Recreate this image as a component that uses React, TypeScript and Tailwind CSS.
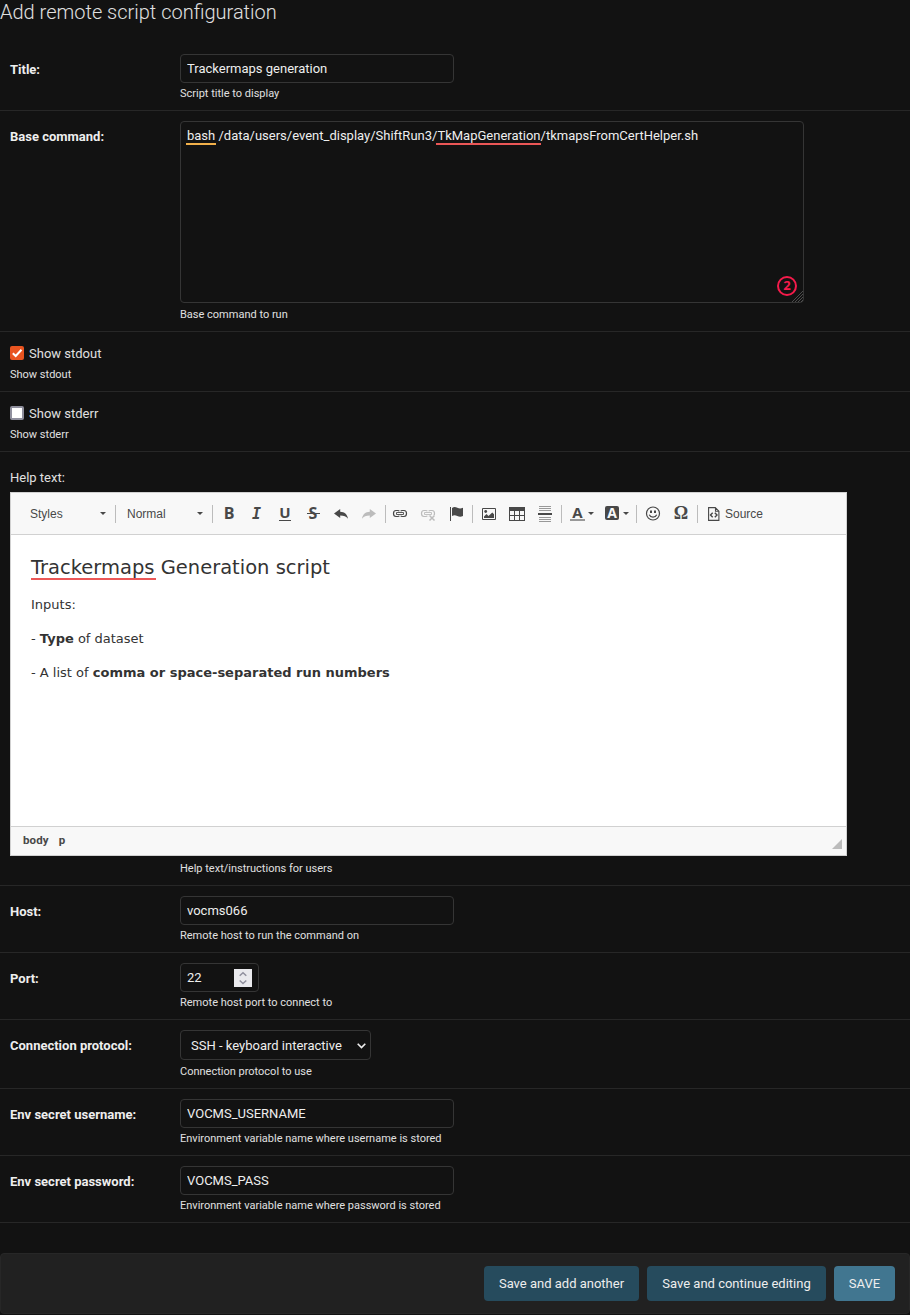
import type { ReactNode } from "react";

const ICON = "#484848";
const MUTED = "#bcbcbc";

function Help({ children, className = "mt-1" }: { children: ReactNode; className?: string }) {
  return <p className={`text-[11px] leading-[14px] text-[#e0e0e0] ${className}`}>{children}</p>;
}

function Row({ label, height = "h-[67px]", children }: { label: string; height?: string; children: ReactNode }) {
  return (
    <div className={`flex border-b border-[#272727] px-[10px] pt-[10px] ${height}`}>
      <label className="w-[170px] shrink-0 pt-[5px] text-[13px] leading-[22px] font-bold text-[#eeeeee]">{label}</label>
      <div>{children}</div>
    </div>
  );
}

function TextInput({ value }: { value: string }) {
  return (
    <input
      type="text"
      defaultValue={value}
      className="block h-[29px] w-[274px] rounded border border-[#353535] bg-[#121212] px-[6px] text-[13px] text-[#eeeeee] outline-none"
    />
  );
}

function CheckRow({ label, checked }: { label: string; checked?: boolean }) {
  return (
    <div className="h-[60px] border-b border-[#272727] px-[10px] pt-[11px]">
      <div className="flex h-[22px] items-center gap-[5px]">
        {checked ? (
          <svg width="14" height="14" viewBox="0 0 14 14" className="mb-[2px]" role="checkbox" aria-checked="true">
            <rect width="14" height="14" rx="2" fill="#e95420" />
            <path d="M2.800 7.200 5.700 10 11.500 3.800" fill="none" stroke="#fff" strokeWidth="2" />
          </svg>
        ) : (
          <span className="mb-[2px] size-[14px] rounded-[2px] border-2 border-[#8f8f9d] bg-white" role="checkbox" aria-checked="false" />
        )}
        <span className="text-[13px] leading-[22px] text-[#e0e0e0]">{label}</span>
      </div>
      <Help className="mt-[3px]">{label}</Help>
    </div>
  );
}

function Sep({ className = "" }: { className?: string }) {
  return <span className={`h-[18px] w-px shrink-0 bg-[#bcbcbc] ${className}`} />;
}

function Caret({ className = "" }: { className?: string }) {
  return (
    <svg width="6" height="3" viewBox="0 0 6 3" className={`shrink-0 ${className}`}>
      <path d="M0 0h6L3 3z" fill={ICON} />
    </svg>
  );
}

function Tool({ children }: { children: ReactNode }) {
  return <span className="flex h-7 w-7 shrink-0 items-center justify-center">{children}</span>;
}

function Svg({ children }: { children: ReactNode }) {
  return (
    <svg width="16" height="16" viewBox="0 0 16 16" fill="none">
      {children}
    </svg>
  );
}

function LinkShape({ color }: { color: string }) {
  return (
    <g stroke={color}>
      <path d="M7.300 5.200C7 4.700 6.500 4.500 6 4.500H4C2.300 4.500 1.500 5.800 1.500 7.500S2.300 10.500 4 10.500h2c.5 0 1-.2 1.300-.7" strokeWidth="1.200" />
      <path d="M8.700 5.200c.3-.5.8-.7 1.300-.7h2c1.700 0 2.500 1.300 2.500 3s-.8 3-2.500 3h-2c-.5 0-1-.2-1.300-.7" strokeWidth="1.200" />
      <path d="M4.500 6.500h7v2h-7z" strokeWidth=".9" />
    </g>
  );
}

function Toolbar() {
  return (
    <div className="flex h-[42px] items-center border-b border-[#d1d1d1] bg-[#f8f8f8] font-['Liberation_Sans',sans-serif] text-[12px] text-[#484848]">
      <span className="ml-[19px] w-[70px] pt-px">Styles</span>
      <Caret />
      <Sep className="ml-[9px]" />
      <span className="ml-[11px] w-[70px] pt-px">Normal</span>
      <Caret />
      <Sep className="ml-[9px]" />
      <span className="w-[2px]" />
      <Tool>
        <b className="mb-[2px] font-['Open_Sans',sans-serif] text-[16px] leading-4">B</b>
      </Tool>
      <Tool>
        <b className="-ml-px font-['DejaVu_Sans_Mono',monospace] text-[15px] leading-4 italic">I</b>
      </Tool>
      <Tool>
        <b className="h-[15px] border-b border-[#484848] font-['Open_Sans',sans-serif] text-[15px] leading-[13px]">U</b>
      </Tool>
      <Tool>
        <span className="relative mb-[2px] flex w-[13px] justify-center">
          <b className="font-['Open_Sans',sans-serif] text-[16px] leading-4">S</b>
          <span className="absolute top-[8px] left-0 h-px w-[13px] bg-[#484848]" />
        </span>
      </Tool>
      <Tool>
        <Svg>
          <path d="M1 7.500 7.200 3v2.700c4.300.1 7 2.200 7.800 7C13.200 10.500 11 9.500 7.200 9.500V12z" fill={ICON} />
        </Svg>
      </Tool>
      <Tool>
        <Svg>
          <path d="M15 7.500 8.800 3v2.700C4.500 5.800 1.800 7.900 1 12.700c1.800-2.200 4-3.200 7.800-3.200V12z" fill={MUTED} />
        </Svg>
      </Tool>
      <Sep className="ml-[2px]" />
      <Tool>
        <Svg>
          <LinkShape color={ICON} />
        </Svg>
      </Tool>
      <Tool>
        <Svg>
          <LinkShape color={MUTED} />
          <path d="M8.500 9h7.500v7H8.500z" fill="#f8f8f8" />
          <path d="m9.500 9.500 5 5M14.500 9.500l-5 5" stroke={MUTED} strokeWidth="1.500" />
        </Svg>
      </Tool>
      <Tool>
        <Svg>
          <path d="M2 1h1v14H2z" fill={ICON} />
          <path d="M4 2c2-1.300 3.500-1 5.300-.2 2 .8 3.500.8 5.700 0V10c-2.200.9-3.700.8-5.700 0C7.500 9.200 6 9 4 10z" fill={ICON} />
        </Svg>
      </Tool>
      <Sep className="ml-[2px]" />
      <span className="w-[2px]" />
      <Tool>
        <Svg>
          <path d="M1.500 2.500h13v11h-13z" stroke={ICON} />
          <circle cx="4.700" cy="5.500" r="1.400" fill={ICON} />
          <path d="M3 12V10.500L5.500 8l2 2L11.300 6.500 13 8.300V12z" fill={ICON} />
        </Svg>
      </Tool>
      <Tool>
        <Svg>
          <path d="M0 1h16v14H0z" fill={ICON} />
          <path d="M1 5h4v4H1zM6 5h4v4H6zM11 5h4v4h-4zM1 10h4v4H1zM6 10h4v4H6zM11 10h4v4h-4z" fill="#f8f8f8" />
        </Svg>
      </Tool>
      <Tool>
        <Svg>
          <path d="M2 .5h12M2 2.500h12M2 4.500h12M2 11.500h12M2 13.500h12M2 15.500h12" stroke="#999" />
          <path d="M1 7h14v2H1z" fill={ICON} />
        </Svg>
      </Tool>
      <Sep className="ml-[2px]" />
      <span className="ml-2 flex h-[15px] flex-col items-center justify-between">
        <b className="font-['Open_Sans',sans-serif] text-[15px] leading-[12px]">A</b>
        <span className="h-[2px] w-[15px] bg-[#999999]" />
      </span>
      <Caret className="ml-[3px]" />
      <span className="mb-px ml-[11px] flex size-[14px] items-center justify-center rounded-[2px] bg-[#484848]">
        <b className="font-['Open_Sans',sans-serif] text-[14px] leading-[14px] text-[#f8f8f8]">A</b>
      </span>
      <Caret className="ml-1" />
      <Sep className="ml-[7px]" />
      <span className="w-[2px]" />
      <Tool>
        <Svg>
          <circle cx="8" cy="7.500" r="6.500" stroke={ICON} strokeWidth="1.200" />
          <path d="M5 4.500h2V7H5zM9 4.500h2V7H9z" fill={ICON} />
          <path d="M4.300 8.800c1.200 3 6.200 3 7.400 0" stroke={ICON} strokeWidth="1.200" />
        </Svg>
      </Tool>
      <Tool>
        <b className="mb-px font-['Liberation_Serif',serif] text-[18px] leading-4">Ω</b>
      </Tool>
      <Sep className="ml-[2px]" />
      <svg width="12" height="14" viewBox="0 0 12 14" fill="none" className="ml-[10px]">
        <path d="M.6.600h6.700l3.600 3.600v9.200H.6zM7.500.5v3.700H11" stroke={ICON} strokeWidth="1.100" />
        <path d="M4.700 5.800 2.500 8l2.200 2.200M6.800 5.800 9 8l-2.200 2.200" stroke={ICON} strokeWidth="1.400" />
      </svg>
      <span className="ml-[5px] pt-px">Source</span>
    </div>
  );
}

function Editor() {
  return (
    <div className="h-[364px] w-[837px] border border-[#d1d1d1] bg-white">
      <Toolbar />
      <div className="h-[291px] px-5 pt-5 font-['DejaVu_Sans',sans-serif] text-[13px] leading-[21px] text-[#333333]">
        <h2 className="h-[24px] text-[19.5px] leading-[26px]">
          <span className="relative">
            Trackermaps
            <span className="absolute -bottom-px left-0 h-[2px] w-[125px] bg-[#eb5757]" />
          </span>{" "}
          Generation script
        </h2>
        <p className="mt-[15px]">Inputs:</p>
        <p className="mt-[13px]">
          - <b>Type</b> of dataset
        </p>
        <p className="mt-[13px]">
          - A list of <b>comma or space-separated run numbers</b>
        </p>
      </div>
      <div className="flex h-[29px] items-center justify-between border-t border-[#d1d1d1] bg-[#f8f8f8] pr-1 pl-3 text-[11.5px] font-bold tracking-[0.1px] text-[#484848]">
        <div className="flex gap-[10px]">
          <span>body</span>
          <span>p</span>
        </div>
        <svg width="10" height="10" viewBox="0 0 10 10" className="mt-[6px]">
          <path d="M10 0v10H0z" fill="#bcbcbc" />
        </svg>
      </div>
    </div>
  );
}

function SaveButton({ children, className }: { children: ReactNode; className: string }) {
  return <button className={`h-[35px] rounded text-[13px] text-[#eeeeee] ${className}`}>{children}</button>;
}

export default function App() {
  return (
    <main className="min-h-[1315px] w-full overflow-hidden bg-[#121212] font-[Roboto,sans-serif] text-[#eeeeee]">
      <h1 className="h-[44px] text-[20px] leading-6 font-light text-[#e0e0e0]">Add remote script configuration</h1>

      <Row label="Title:">
        <TextInput value="Trackermaps generation" />
        <Help>Script title to display</Help>
      </Row>

      <Row label="Base command:" height="h-[221px]">
        <div className="relative h-[182px] w-[624px] rounded border border-[#353535] px-[6px] pt-[6px] text-[13px] leading-4">
          <span className="relative">
            bash
            <span className="absolute top-[15px] -left-px h-[2px] w-[30px] bg-[#f2b04a]" />
          </span>{" "}
          /data/users/event_display/ShiftRun3/
          <span className="relative">
            TkMapGeneration
            <span className="absolute top-[15px] -left-px h-[2px] w-[105px] bg-[#eb5757]" />
          </span>
          /tkmapsFromCertHelper.sh
          <span className="absolute right-[6px] bottom-[6px] flex size-5 items-center justify-center rounded-full border-2 border-[#f51b4b] pb-px font-['Open_Sans',sans-serif] text-[13px] leading-[15px] font-bold text-[#f51b4b]">
            2
          </span>
          <svg width="11" height="11" viewBox="0 0 11 11" className="absolute right-0 bottom-0">
            <path d="M0 11 11 0M3 11l8-8M6 11l5-5M9 11l2-2" stroke="#5c5c5c" strokeWidth=".8" />
          </svg>
        </div>
        <Help className="mt-[5px]">Base command to run</Help>
      </Row>

      <CheckRow label="Show stdout" checked />
      <CheckRow label="Show stderr" />

      <div className="h-[434px] border-b border-[#272727] px-[10px] pt-[14px]">
        <label className="block h-[26px] text-[13px] leading-[23px] text-[#e0e0e0]">Help text:</label>
        <Editor />
        <Help className="mt-[6px] ml-[170px]">Help text/instructions for users</Help>
      </div>

      <Row label="Host:">
        <TextInput value="vocms066" />
        <Help>Remote host to run the command on</Help>
      </Row>

      <Row label="Port:">
        <div className="flex h-[29px] w-[79px] items-center justify-between rounded border border-[#353535] px-[6px] text-[13px]">
          <span>22</span>
          <svg width="18" height="18" viewBox="0 0 18 18">
            <path d="M0 0h18v18H0z" fill="#e9e9ed" />
            <path d="m5.700 6.800 3.300-3 3.300 3M5.700 11.500l3.300 3 3.300-3" fill="none" stroke="#8f8f9d" strokeWidth="1.500" />
          </svg>
        </div>
        <Help>Remote host port to connect to</Help>
      </Row>

      <Row label="Connection protocol:" height="h-[69px]">
        <div className="flex h-[30px] w-[191px] items-center justify-between rounded border border-[#353535] pt-px pr-1 pl-[10px] text-[13px]">
          <span>SSH - keyboard interactive</span>
          <svg width="9" height="6" viewBox="0 0 9 6">
            <path d="m.7.800 3.800 3.800L8.300.800" fill="none" stroke="#eeeeee" strokeWidth="1.600" />
          </svg>
        </div>
        <Help className="mt-[5px]">Connection protocol to use</Help>
      </Row>

      <Row label="Env secret username:">
        <TextInput value="VOCMS_USERNAME" />
        <Help>Environment variable name where username is stored</Help>
      </Row>

      <Row label="Env secret password:">
        <TextInput value="VOCMS_PASS" />
        <Help>Environment variable name where password is stored</Help>
      </Row>

      <div className="mt-[30px] flex h-[61px] justify-end gap-2 rounded border border-[#272727] bg-[#212121] pt-3 pr-[14px]">
        <SaveButton className="w-[155px] bg-[#264b5d]">Save and add another</SaveButton>
        <SaveButton className="w-[179px] bg-[#264b5d]">Save and continue editing</SaveButton>
        <SaveButton className="w-[61px] bg-[#417690]">SAVE</SaveButton>
      </div>
    </main>
  );
}
